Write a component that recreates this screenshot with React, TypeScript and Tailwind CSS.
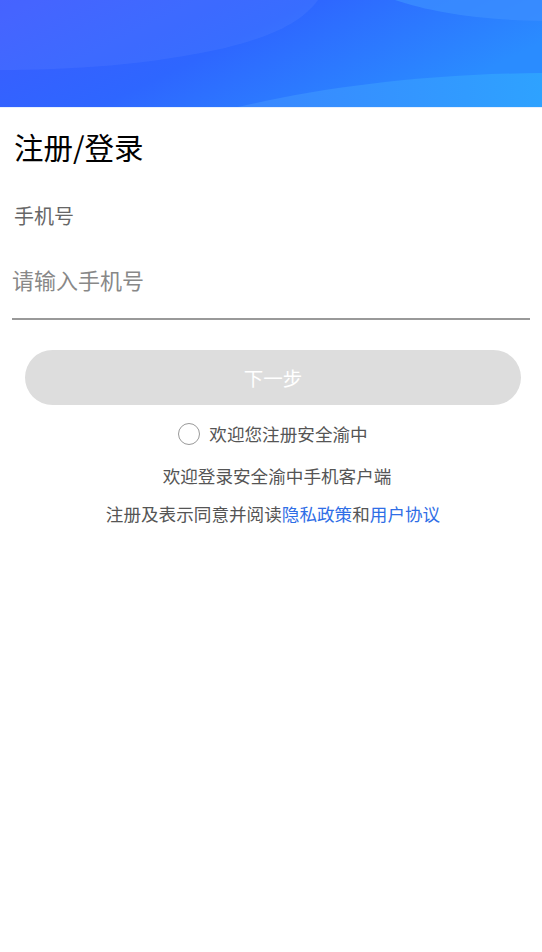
import { useState } from 'react'

function HeaderWaves() {
  return (
    <svg className="block w-full h-[107px]" viewBox="0 0 542 107" preserveAspectRatio="none">
      <defs>
        <linearGradient id="bg" x1="0" y1="0" x2="1" y2="0.4">
          <stop offset="0" stopColor="#3d5bff" />
          <stop offset="0.5" stopColor="#2e66ff" />
          <stop offset="1" stopColor="#2a8cff" />
        </linearGradient>
        <linearGradient id="wave" x1="0" y1="0" x2="1" y2="0">
          <stop offset="0" stopColor="#3a86ff" />
          <stop offset="1" stopColor="#2ea2ff" />
        </linearGradient>
      </defs>
      <rect width="542" height="107" fill="url(#bg)" />
      {/* soft light area top-left */}
      <path d="M0 0 H318 C300 25 265 38 225 48 C150 65 70 70 0 70 Z" fill="#ffffff" opacity="0.05" />
      {/* top right wave */}
      <path d="M395 0 C430 12 480 20 542 21 V0 Z" fill="#3b8dff" opacity="0.8" />
      {/* bottom right wave */}
      <path d="M238 107 C320 88 420 74 542 73 V107 Z" fill="url(#wave)" />
    </svg>
  )
}

export default function App() {
  const [agree, setAgree] = useState(false)
  const [phone, setPhone] = useState('')

  return (
    <div className="min-h-[952px] bg-white" style={{ fontFamily: '"Noto Sans CJK SC", "Noto Sans", sans-serif' }}>
      <HeaderWaves />
      <div className="h-px bg-[#e6f0ff]" />

      <div className="px-[14px] pt-[18px]">
        <h1 className="text-[29.5px] leading-[40px] text-black">注册/登录</h1>
        <div className="mt-[36px] text-[20px] leading-[28px] text-[#666666]">手机号</div>
      </div>

      <div className="mx-[12px] mt-[24px] pb-[14px] border-b-2 border-[#999999]">
        <input
          value={phone}
          onChange={(e) => setPhone(e.target.value)}
          placeholder="请输入手机号"
          className="block w-full h-[50px] text-[22px] text-[#333] placeholder:text-[#888888] outline-none bg-transparent"
        />
      </div>

      <div className="pl-[25px] pr-[21px] mt-[30px]">
        <button className="w-full h-[55px] rounded-full bg-[#dddddd] text-white text-[19.5px]">下一步</button>
      </div>

      <div className="pl-[4px] mt-[17px] flex items-center justify-center gap-[9px]">
        <button
          onClick={() => setAgree(!agree)}
          className="w-[22px] h-[22px] rounded-full border border-[#999999] flex items-center justify-center"
        >
          {agree && <span className="w-[12px] h-[12px] rounded-full bg-[#2e66ff]" />}
        </button>
        <span className="text-[17.6px] leading-[24px] text-[#555555]">欢迎您注册安全渝中</span>
      </div>

      <p className="pl-[12px] mt-[18px] text-center text-[17.6px] leading-[24px] text-[#555555]">欢迎登录安全渝中手机客户端</p>
      <p className="pl-[4px] mt-[14px] text-center text-[17.6px] leading-[24px] text-[#555555]">
        注册及表示同意并阅读<span className="text-[#2f6ee6]">隐私政策</span>和<span className="text-[#2f6ee6]">用户协议</span>
      </p>
    </div>
  )
}
